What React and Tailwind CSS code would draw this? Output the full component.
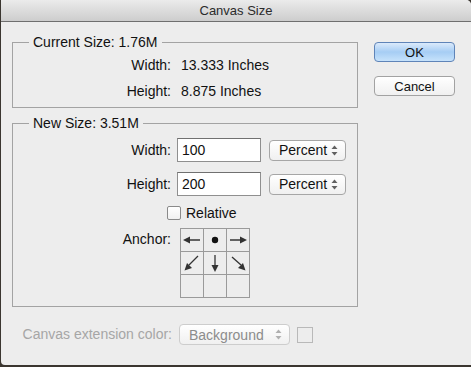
import React from 'react';

const font = { fontFamily: '"Liberation Sans", Arial, sans-serif' };

const Stepper = ({ dim }) => (
  <svg width="7" height="11" viewBox="0 0 7 11" className="shrink-0">
    <path d="M3.5 0.5 L6.5 4 L0.5 4 Z" fill={dim ? '#b0b0b0' : '#606060'} />
    <path d="M3.5 10.5 L6.5 7 L0.5 7 Z" fill={dim ? '#b0b0b0' : '#606060'} />
  </svg>
);

const Select = ({ label, className, dim }) => (
  <div
    className={`flex items-center justify-between rounded-[4px] border bg-gradient-to-b from-[#ffffff] to-[#f0f0f0] pl-[9px] pr-[7px] ${
      dim ? 'border-[#cdcdcd] text-[#8c8c8c]' : 'border-[#a6a6a6] text-[#111]'
    } ${className}`}
  >
    <span className="text-[14px] leading-none">{label}</span>
    <Stepper dim={dim} />
  </div>
);

const Field = ({ value }) => (
  <div className="flex h-[24px] w-[84px] items-center border border-[#8f8f8f] border-t-[#707070] bg-white pl-[4px] text-[14px] text-[#111]">
    {value}
  </div>
);

const Arrow = ({ d, head }) => (
  <svg width="22" height="22" viewBox="0 0 22 22">
    <path d={d} stroke="#333" strokeWidth="1.3" fill="none" />
    <path d={head} fill="#333" />
  </svg>
);

const cells = [
  <Arrow key="l" d="M7 11 H19" head="M2 11 L9 7.5 L9 14.5 Z" />,
  <svg key="c" width="22" height="22" viewBox="0 0 22 22"><circle cx="11" cy="11" r="3.2" fill="#111" /></svg>,
  <Arrow key="r" d="M3 11 H15" head="M20 11 L13 7.5 L13 14.5 Z" />,
  <Arrow key="dl" d="M17 4 L8 13" head="M3.5 18.5 L6 11 L11 16 Z" />,
  <Arrow key="d" d="M11 3 V14" head="M11 20 L7.5 13 L14.5 13 Z" />,
  <Arrow key="dr" d="M5 5 L14 13" head="M18.5 18.5 L11 16 L16 11 Z" />,
  null,
  null,
  null,
];

export default function App() {
  return (
    <div className="h-[367px] w-[471px] overflow-hidden bg-[#3b3630] pb-[2px] pl-[1px]" style={font}>
      <div className="flex h-full flex-col overflow-hidden rounded-bl-[4px] rounded-tr-[5px] bg-[#ededed]">
        {/* title bar */}
        <div className="flex h-[22px] shrink-0 items-center justify-center border-b border-[#6f6f6f] bg-gradient-to-b from-[#ebebeb] to-[#cdcdcd] text-[13px] text-[#2b2b2b]">
          Canvas Size
        </div>

        <div className="flex flex-1">
          <div className="pl-[11px] pt-[12px]">
            <fieldset className="w-[346px] border border-[#a3a3a3] pb-[6px]">
              <legend className="ml-[16px] px-[4px] text-[14px] leading-[16px] text-[#111]">Current Size: 1.76M</legend>
              <div className="grid grid-cols-[158px_auto] gap-x-[10px] gap-y-[6px] pt-[5px] text-[14px] leading-[20px] text-[#111]">
                <span className="text-right">Width:</span>
                <span>13.333 Inches</span>
                <span className="text-right">Height:</span>
                <span>8.875 Inches</span>
              </div>
            </fieldset>

            <fieldset className="mt-[7px] w-[346px] border border-[#a3a3a3] pb-[8px] text-[14px] text-[#111]">
              <legend className="ml-[16px] px-[4px] text-[14px] leading-[16px]">New Size: 3.51M</legend>
              <div className="grid grid-cols-[158px_auto] items-center gap-x-[6px] gap-y-[10px] pt-[7px]">
                <span className="text-right">Width:</span>
                <div className="flex items-center gap-[8px]">
                  <Field value="100" />
                  <Select label="Percent" className="h-[21px] w-[77px]" />
                </div>
                <span className="text-right">Height:</span>
                <div className="flex items-center gap-[8px]">
                  <Field value="200" />
                  <Select label="Percent" className="h-[21px] w-[77px]" />
                </div>
              </div>
              <div className="mt-[9px] flex items-center gap-[5px] pl-[154px]">
                <span className="h-[14px] w-[14px] rounded-[2px] border border-[#8a8a8a] bg-gradient-to-b from-white to-[#f1f1f1]" />
                <span className="leading-[16px]">Relative</span>
              </div>
              <div className="mt-[7px] flex items-start">
                <span className="w-[158px] pt-[3px] text-right leading-[16px]">Anchor:</span>
                <div className="ml-[9px] grid w-[70px] grid-cols-3 gap-px bg-[#9a9a9a] p-px">
                  {cells.map((c, i) => (
                    <div key={i} className="flex h-[22px] w-[22px] items-center justify-center bg-[#ededed]">
                      {c}
                    </div>
                  ))}
                </div>
              </div>
            </fieldset>

            <div className="mt-[17px] flex items-center">
              <span className="w-[160px] text-right text-[14px] text-[#a6a6a6]">Canvas extension color:</span>
              <Select label="Background" dim className="ml-[7px] h-[21px] w-[111px]" />
              <span className="ml-[7px] h-[16px] w-[16px] border border-[#b9b9b9] bg-[#ededed]" />
            </div>
          </div>

          <div className="flex flex-col gap-[14px] pl-[16px] pt-[20px]">
            <button className="h-[20px] w-[81px] rounded-[4px] border border-[#5f84b8] bg-gradient-to-b from-[#dbeafb] via-[#a6cdf4] to-[#c6e2fb] text-[13px] leading-none text-[#111]">
              OK
            </button>
            <button className="h-[20px] w-[81px] rounded-[4px] border border-[#a2a2a2] bg-gradient-to-b from-white to-[#f0f0f0] text-[13px] leading-none text-[#111]">
              Cancel
            </button>
          </div>
        </div>
      </div>
    </div>
  );
}
